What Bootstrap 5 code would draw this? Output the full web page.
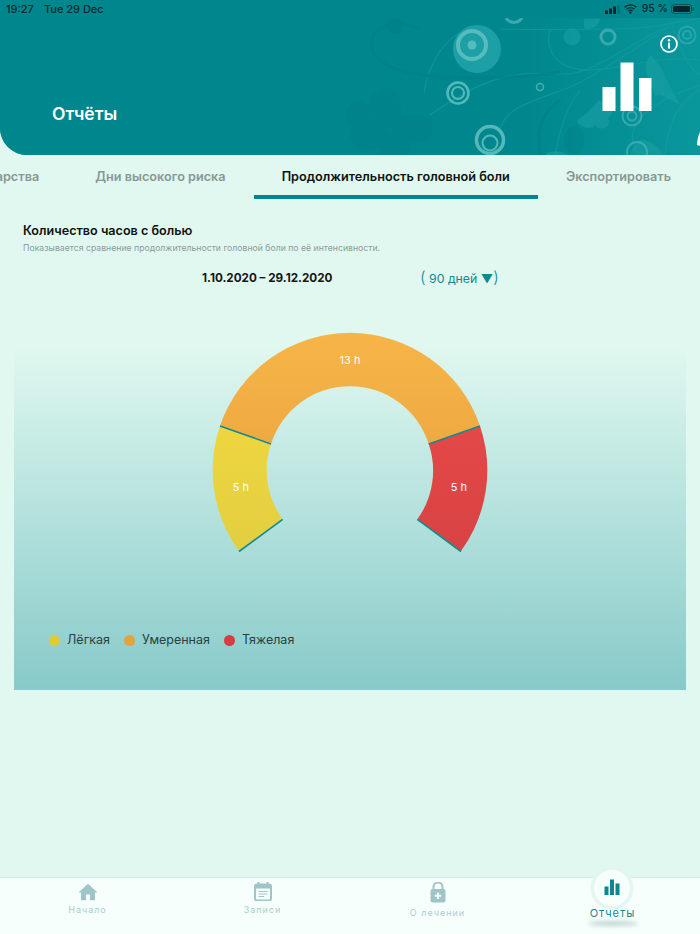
<!DOCTYPE html>
<html lang="ru">
<head>
<meta charset="utf-8">
<title>Отчёты</title>
<link rel="stylesheet" href="https://cdn.jsdelivr.net/npm/bootstrap@5.3.0/dist/css/bootstrap.min.css">
<style>
html,body{height:100%;}
body{width:700px;height:934px;overflow:hidden;background:#e0f8f0;font-family:Inter,"Liberation Sans",sans-serif;color:#111;}
.app-head{height:155px;background:#00878e;border-bottom-left-radius:27px;position:relative;overflow:hidden;flex:none;}
.head-art{position:absolute;left:0;top:18px;width:700px;height:137px;}
.status-row{height:18px;font-size:11px;font-weight:500;color:#07262b;padding:0 5px 0 6px;position:relative;z-index:1;}
.status-row .when{margin-right:10px;}
.signal-icon{margin-right:4px;}
.wifi-icon{margin-right:5px;}
.batt-text{font-size:10.5px;margin-right:3px;}
.head-title{position:absolute;left:52px;top:103px;font-size:17.5px;font-weight:600;line-height:22px;color:#fff;}
.head-info{position:absolute;left:660px;top:35px;}
.head-bars{position:absolute;left:602px;top:62px;}
.tab-strip{height:45px;flex:none;overflow:hidden;padding-right:1px;}
.tab-item{flex:none;padding:0 28px;height:44px;line-height:43px;font-size:12.7px;font-weight:600;color:#8a9794;white-space:nowrap;}
.tab-item.on{color:#111;border-bottom:4px solid #00878e;}
.intro-box{padding:22px 23px 0;height:75px;flex:none;}
.intro-title{font-size:12.6px;font-weight:600;line-height:18px;margin:0;}
.intro-note{font-size:8.7px;line-height:12px;color:#8e9b98;margin:2px 0 0;}
.range-row{height:24px;margin-top:12px;}
.range-date{width:397px;padding-left:179px;font-size:11.7px;font-weight:700;line-height:18px;color:#151515;white-space:nowrap;}
.range-pick{font-size:12.3px;line-height:18px;color:#12898f;white-space:nowrap;}
.range-pick .par{font-size:16px;font-weight:300;}
.chart-panel{margin:44px 14px 0;height:371px;background:linear-gradient(#e0f8f0 7%,#87cac9 100%);flex:none;}
.chart-panel svg{display:block;}
.legend-row{margin-top:62px;padding-left:35px;font-size:12.5px;line-height:18px;color:#2a3f40;gap:14px;}
.legend-dot{width:11px;height:11px;border-radius:50%;margin-right:7px;}
.dot-a{background:#dfca3a;}.dot-b{background:#e2a23d;}.dot-c{background:#d23e42;}
.tab-bar{height:57px;background:#f6fffc;border-top:1px solid #d3ebe5;flex:none;margin-top:auto;}
.bar-item{width:175px;font-size:9px;letter-spacing:1px;color:#a9cdd0;line-height:12px;position:relative;padding-top:4px;}
.bar-item svg{display:block;margin-bottom:3px;}
.bar-home{padding-top:5px;}
.bar-lock svg{margin-bottom:4px;}
.bar-live{color:#19868d;font-size:11px;padding-top:28px;line-height:14px;}
.live-bubble{position:absolute;left:50%;top:-8px;width:36px;height:36px;margin-left:-18.5px;border-radius:50%;background:#f6fffc;box-shadow:0 0 0 3.5px #e2f7f1;}
.live-shadow{position:absolute;left:50%;top:43px;width:50px;height:5px;margin-left:-25px;border-radius:50%;background:#c2d4d0;filter:blur(2px);}
</style>
</head>
<body class="d-flex flex-column">
<header class="app-head">
  <svg class="head-art" viewBox="0 18 700 137" aria-hidden="true">
    <rect x="0" y="18" width="700" height="137" fill="#00878e"/>
    <defs><linearGradient id="sheen" x1="0" x2="1" y1="0" y2="0"><stop offset=".5" stop-color="#0b9ba0" stop-opacity="0"/><stop offset="1" stop-color="#0b9ba0" stop-opacity=".8"/></linearGradient></defs>
    <rect x="350" y="18" width="350" height="137" fill="url(#sheen)"/>
    <g fill="none" stroke="#1a9ea2" stroke-width="1.2" opacity=".55">
      <path d="M424 93C428 65 445 32 477 27"/>
      <path d="M500 29C530 30 580 30 640 28 660 26 680 22 700 18"/>
      <path d="M430 115C480 80 510 70 560 74 590 76 620 50 660 30"/>
      <path d="M500 130C505 105 540 100 575 85 605 70 640 45 670 26"/>
      <path d="M555 155C560 130 565 110 580 90M640 155C620 130 640 105 700 85M665 155C668 120 680 100 700 90"/>
      <path d="M550 30C545 45 552 70 590 70 620 70 655 55 700 60"/>
      <path d="M672 25C680 50 690 70 700 75"/>
    </g>
    <g fill="none" stroke="#007f86" stroke-width="3" opacity=".6">
      <path d="M420 30C395 18 372 25 372 45 372 70 420 78 470 78 520 78 540 75 560 72"/>
      <path d="M540 155C535 125 545 110 560 100"/>
    </g>
    <circle cx="395" cy="26" r="8" fill="#007f86" opacity=".6"/>
    <g fill="#00818a" opacity=".5">
      <ellipse cx="385" cy="108" rx="16" ry="20"/><ellipse cx="413" cy="128" rx="20" ry="15"/>
      <ellipse cx="370" cy="135" rx="20" ry="15"/><ellipse cx="395" cy="148" rx="15" ry="18"/><ellipse cx="358" cy="115" rx="12" ry="14"/>
      <ellipse cx="574" cy="140" rx="10" ry="14"/>
    </g>
    <g fill="#1aa0a4" opacity=".6">
      <path d="M580 118C590 112 594 104 600 100 602 106 606 100 612 98 610 104 616 112 608 118 612 128 600 132 595 125 590 130 582 128 577 122Z"/>
      <path d="M648 58C652 52 654 60 660 66 666 78 672 92 680 104 668 100 662 92 655 96 652 84 642 72 648 58Z"/>
      <circle cx="572" cy="37" r="8.5"/><path d="M584 19H600C598 27 590 31 584 28Z"/>
      <path d="M640 140C650 138 660 150 665 155H630C632 148 636 142 640 140Z"/><path d="M545 155C550 150 560 150 568 155Z"/>
    </g>
    <circle cx="477" cy="49" r="24" fill="#1ca0a5"/>
    <circle cx="472" cy="45" r="14" fill="none" stroke="#56bcbd" stroke-width="4"/>
    <circle cx="472" cy="45" r="4.5" fill="#56bcbd"/>
    <g fill="none" stroke="#55b9ba">
      <circle cx="458" cy="93" r="10.5" stroke-width="2.5"/><circle cx="458" cy="93" r="6" stroke-width="2"/>
      <circle cx="490" cy="140" r="13.5" stroke-width="3.5"/><circle cx="490" cy="143" r="7.5" stroke-width="2"/>
      <circle cx="540" cy="87" r="3.5" stroke-width="1.5" opacity=".8"/>
      <circle cx="608" cy="37" r="7" stroke-width="3" opacity=".65"/>
      <circle cx="687" cy="35" r="8.5" stroke-width="2" opacity=".45"/><circle cx="687" cy="35" r="4" stroke-width="2" opacity=".45"/>
      <circle cx="632" cy="116" r="9.5" stroke-width="2" opacity=".6"/><circle cx="632" cy="116" r="4.5" stroke-width="2" opacity=".6"/>
      <circle cx="637" cy="152" r="10" stroke-width="2" opacity=".6"/>
      <path d="M506 18C510 24 518 24 522 18" stroke-width="3" opacity=".7"/>
    </g>
    <path d="M700 132C698 136 697 141 697 145L700 146Z" fill="#f4fffb"/>
  </svg>
  <div class="status-row d-flex align-items-center">
    <span class="when">19:27</span><span>Tue 29 Dec</span>
    <span class="ms-auto d-flex align-items-center">
      <svg class="signal-icon" width="15" height="9" viewBox="0 0 15 9"><rect x="0" y="5.500" width="3" height="3.500" fill="#07262b"/><rect x="4" y="3.500" width="3" height="5.500" fill="#07262b"/><rect x="8" y="1.500" width="3" height="7.500" fill="#07262b"/><rect x="12" y="0" width="3" height="9" fill="#07262b" opacity=".2"/></svg>
      <svg class="wifi-icon" width="13" height="10" viewBox="0 0 13 10"><path d="M.6 3.200a8.500 8.500 0 0 1 11.800 0M2.600 5.200a5.600 5.600 0 0 1 7.800 0M4.500 7a3 3 0 0 1 4 0" fill="none" stroke="#07262b" stroke-width="1.300"/><circle cx="6.500" cy="8.600" r="1.100" fill="#07262b"/></svg>
      <span class="batt-text">95 %</span>
      <svg width="24" height="10" viewBox="0 0 24 10"><rect x=".5" y=".5" width="20" height="9" rx="2.500" fill="none" stroke="#07262b" opacity=".45"/><rect x="2" y="2" width="17" height="6" rx="1.200" fill="#07262b"/><rect x="21.600" y="3.400" width="1.200" height="3.200" fill="#07262b" opacity=".5"/></svg>
    </span>
  </div>
  <svg class="head-info" width="18" height="18" viewBox="0 0 18 18" aria-hidden="true"><circle cx="9" cy="9" r="8" fill="none" stroke="#fff" stroke-width="1.700"/><circle cx="9" cy="5.200" r="1.200" fill="#fff"/><rect x="8" y="7.600" width="2" height="6" fill="#fff"/></svg>
  <svg class="head-bars" width="50" height="50" viewBox="0 0 50 50" aria-hidden="true"><rect x="0.500" y="25" width="13" height="24" fill="#fff"/><rect x="18.500" y="0.500" width="13" height="48.500" fill="#fff"/><rect x="37" y="16" width="12.500" height="33" fill="#fff"/></svg>
  <div class="head-title">Отчёты</div>
</header>

<nav class="tab-strip d-flex justify-content-end">
  <div class="tab-item">Лекарства</div>
  <div class="tab-item">Дни высокого риска</div>
  <div class="tab-item on">Продолжительность головной боли</div>
  <div class="tab-item">Экспортировать</div>
</nav>

<section class="intro-box">
  <h1 class="intro-title">Количество часов с болью</h1>
  <p class="intro-note">Показывается сравнение продолжительности головной боли по её интенсивности.</p>
  <div class="range-row d-flex align-items-center">
    <div class="range-date">1.10.2020 – 29.12.2020</div>
    <div class="range-pick"><span class="par">(</span> 90 дней ▼<span class="par">)</span></div>
  </div>
</section>

<section class="chart-panel">
  <svg width="672" height="250" viewBox="14 319 672 250" role="img">
    <defs>
      <linearGradient id="gy" x1="0" x2="0" y1="0" y2="1"><stop offset="0" stop-color="#eed63f"/><stop offset="1" stop-color="#e2ce40"/></linearGradient>
      <linearGradient id="go" x1="0" x2="0" y1="0" y2="1"><stop offset="0" stop-color="#f7b548"/><stop offset="1" stop-color="#eeaa42"/></linearGradient>
      <linearGradient id="gr" x1="0" x2="0" y1="0" y2="1"><stop offset="0" stop-color="#e44848"/><stop offset="1" stop-color="#d84343"/></linearGradient>
    </defs>
    <path d="M239 551A137.300 137.300 0 0 1 220 426L271 444A82.700 82.700 0 0 0 282.700 519.300Z" fill="url(#gy)"/>
    <path d="M220 426A137.300 137.300 0 0 1 480 426L428.700 444A82.700 82.700 0 0 0 271 444Z" fill="url(#go)"/>
    <path d="M480 426A137.300 137.300 0 0 1 461 551L417.300 519.300A82.700 82.700 0 0 0 428.700 444Z" fill="url(#gr)"/>
    <g stroke="#0f8c92" stroke-width="1.600" fill="none">
      <path d="M220 426L271 444M480 426L428.700 444M239 551.500L282.700 519.300M461 551.500L417.300 519.300"/>
    </g>
    <g fill="#fff" font-size="11" text-anchor="middle" font-family="Inter,'Liberation Sans',sans-serif">
      <text x="350" y="364">13 h</text>
      <text x="241" y="491">5 h</text>
      <text x="459" y="491">5 h</text>
    </g>
  </svg>
  <div class="legend-row d-flex align-items-center">
    <span class="d-flex align-items-center"><span class="legend-dot dot-a"></span>Лёгкая</span>
    <span class="d-flex align-items-center"><span class="legend-dot dot-b"></span>Умеренная</span>
    <span class="d-flex align-items-center"><span class="legend-dot dot-c"></span>Тяжелая</span>
  </div>
</section>

<footer class="tab-bar d-flex">
  <div class="bar-item bar-home d-flex flex-column align-items-center">
    <svg width="20" height="18" viewBox="0 0 20 18" aria-hidden="true"><path d="M10 .8 19.500 9.500H17V17.200H12V11.500H8V17.200H3V9.500H.5Z" fill="#9fc5c8"/></svg>
    <span>Начало</span>
  </div>
  <div class="bar-item d-flex flex-column align-items-center">
    <svg width="18" height="19" viewBox="0 0 18 19" aria-hidden="true"><rect x="1" y="2.500" width="16" height="16" rx="2" fill="none" stroke="#9fc5c8" stroke-width="2"/><rect x="1" y="2.500" width="16" height="4" fill="#9fc5c8"/><rect x="3.500" y="0" width="2" height="4" fill="#9fc5c8"/><rect x="12.500" y="0" width="2" height="4" fill="#9fc5c8"/><path d="M4.500 9.500H13.500M4.500 12H13.500M4.500 14.500H10" stroke="#9fc5c8" stroke-width="1.200"/></svg>
    <span>Записи</span>
  </div>
  <div class="bar-item bar-lock d-flex flex-column align-items-center">
    <svg width="16" height="21" viewBox="0 0 16 21" aria-hidden="true"><path d="M3.500 8V5a4.500 4.500 0 0 1 9 0V8" fill="none" stroke="#9fc5c8" stroke-width="2"/><rect x="0.500" y="7" width="15" height="13.500" rx="2" fill="#9fc5c8"/><path d="M8 10.500V17M4.800 13.700H11.200" stroke="#f6fffc" stroke-width="2"/></svg>
    <span>О лечении</span>
  </div>
  <div class="bar-item bar-live d-flex flex-column align-items-center">
    <span class="live-bubble d-flex align-items-center justify-content-center">
      <svg width="16" height="16" viewBox="0 0 16 16" aria-hidden="true"><rect x="0.500" y="7.500" width="4" height="8.500" fill="#0f868d"/><rect x="6" y="0.500" width="4" height="15.500" fill="#0f868d"/><rect x="11.500" y="4.500" width="4" height="11.500" fill="#0f868d"/></svg>
    </span>
    <span>Отчёты</span>
    <span class="live-shadow"></span>
  </div>
</footer>
</body>
</html>
